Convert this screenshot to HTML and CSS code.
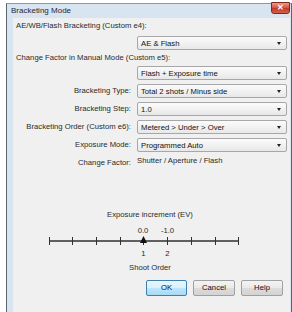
FILE: index.html
```html
<!DOCTYPE html>
<html lang="en">
<head>
    <meta charset="UTF-8">
    <title>Bracketing Mode</title>
    <link rel="stylesheet" href="styles.css">
</head>
<body>
    <div class="window">
        <div class="titlebar">
            <span class="title">Bracketing Mode</span>
            <div class="close">&#x2715;</div>
        </div>
        <div class="client">
            <div class="form">
                <div class="label full first">AE/WB/Flash Bracketing (Custom e4):</div>
                <div class="select col2"><span>AE &amp; Flash</span><i></i></div>
                <div class="label full second">Change Factor in Manual Mode (Custom e5):</div>
                <div class="select col2"><span>Flash + Exposure time</span><i></i></div>
                <div class="label right">Bracketing Type:</div>
                <div class="select"><span>Total 2 shots / Minus side</span><i></i></div>
                <div class="label right">Bracketing Step:</div>
                <div class="select"><span>1.0</span><i></i></div>
                <div class="label right">Bracketing Order (Custom e6):</div>
                <div class="select"><span>Metered &gt; Under &gt; Over</span><i></i></div>
                <div class="label right">Exposure Mode:</div>
                <div class="select"><span>Programmed Auto</span><i></i></div>
                <div class="label right">Change Factor:</div>
                <div class="label">Shutter / Aperture / Flash</div>
            </div>

            <div class="caption inc">Exposure increment (EV)</div>
            <svg class="scale" width="276" height="34" viewBox="0 0 276 34">
                <text x="130" y="9" text-anchor="middle">0.0</text>
                <text x="154.5" y="9" text-anchor="middle">-1.0</text>
                <line x1="36" y1="17" x2="226" y2="17" class="axis"/>
                <g class="ticks">
                    <line x1="36.5" y1="13" x2="36.5" y2="21"/>
                    <line x1="59.5" y1="13" x2="59.5" y2="21"/>
                    <line x1="83.5" y1="13" x2="83.5" y2="21"/>
                    <line x1="107.5" y1="13" x2="107.5" y2="21"/>
                    <line x1="130.5" y1="13" x2="130.5" y2="21"/>
                    <line x1="154.5" y1="13" x2="154.5" y2="21"/>
                    <line x1="178.5" y1="13" x2="178.5" y2="21"/>
                    <line x1="202.5" y1="13" x2="202.5" y2="21"/>
                    <line x1="225.5" y1="13" x2="225.5" y2="21"/>
                </g>
                <polygon points="130.5,12 127,19 134,19" class="marker"/>
                <text x="130.5" y="32" text-anchor="middle">1</text>
                <text x="154.5" y="32" text-anchor="middle">2</text>
            </svg>
            <div class="caption order">Shoot Order</div>

            <div class="buttons">
                <div class="btn default">OK</div>
                <div class="btn">Cancel</div>
                <div class="btn">Help</div>
            </div>
        </div>
    </div>
</body>
</html>
```

FILE: styles.css
```css
*{
    padding:0;
    margin:0;
    box-sizing: border-box;
}
body{
    background:#fff;
    font-family: "Liberation Sans", Arial, sans-serif;
    font-size:7.7px;
    color:#2a2a2a;
    width:292px;
    height:312px;
    overflow:hidden;
}
.window{
    margin:3px 0 0 6px;
    width:286px;
    height:309px;
    background:#d9e4f1;
    border:1px solid #5d6670;
    border-top-color:#8a9aae;
    border-bottom:none;
    display:flex;
    flex-direction:column;
}
.titlebar{
    height:14px;
    display:flex;
    justify-content:space-between;
    align-items:flex-start;
    padding-left:4px;
}
.title{
    font-size:8px;
    color:#1b2a3c;
    line-height:14px;
}
.close{
    width:19px;
    height:12px;
    margin:-2px 1px 0 0;
    border:1px solid #7a2a22;
    border-radius:0 0 3px 3px;
    background:linear-gradient(#e99a8c, #d45a48 45%, #c23a28 55%, #d8604e);
    color:#fff;
    font-size:8px;
    font-weight:bold;
    line-height:10px;
    text-align:center;
}
.client{
    flex:1;
    margin:0 1px 0 6px;
    background:#f0f0f0;
    padding:3px 2px 0 3px;
}
.form{
    display:grid;
    grid-template-columns:115px 150px;
    column-gap:6px;
    row-gap:4px;
}
.label{
    line-height:10px;
    white-space:nowrap;
}
.label.full{
    grid-column:1 / -1;
}
.label.first{
    margin-bottom:1px;
}
.label.second{
    line-height:8px;
}
.label.right{
    text-align:right;
    line-height:14px;
}
.col2{
    grid-column:2;
}
.select{
    height:14px;
    border:1px solid #a7a7a7;
    border-radius:2px;
    background:linear-gradient(#fbfbfb, #e8e8e8);
    display:flex;
    align-items:center;
    justify-content:space-between;
    padding:0 5px 0 3px;
    color:#111;
}
.select i{
    width:0;
    height:0;
    border-left:2.5px solid transparent;
    border-right:2.5px solid transparent;
    border-top:3px solid #222;
}
.caption{
    text-align:center;
    line-height:10px;
    padding-right:4px;
}
.inc{
    margin-top:40px;
}
.scale{
    display:block;
    margin-top:4px;
    margin-left:-3px;
}
.scale text{
    font-family: "Liberation Sans", Arial, sans-serif;
    font-size:7.7px;
    fill:#2a2a2a;
}
.axis{
    stroke:#303030;
    stroke-width:1.3;
}
.ticks line{
    stroke:#303030;
    stroke-width:1;
}
.marker{
    fill:#111;
}
.order{
    margin-top:5px;
}
.buttons{
    display:flex;
    justify-content:flex-end;
    gap:6px;
    margin-top:7px;
    padding-right:5px;
}
.btn{
    width:42px;
    height:16px;
    border:1px solid #a0a0a0;
    border-radius:2px;
    background:linear-gradient(#f4f4f4, #e9e9e9 50%, #dcdcdc 51%, #d3d3d3);
    text-align:center;
    line-height:14px;
    color:#111;
}
.btn.default{
    width:41px;
    border-color:#3c7fb1;
    background:linear-gradient(#eaf6fd, #d9f0fc 50%, #bee6fd 51%, #a7d9f5);
}
```
